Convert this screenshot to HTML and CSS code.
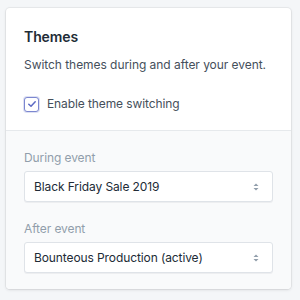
FILE: index.html
```html
<!DOCTYPE html>
<html lang="en">
<head>
    <meta charset="UTF-8">
    <title>Themes</title>
    <link rel="stylesheet" href="styles.css">
</head>
<body>
    <div class="card">
        <div class="card-section">
            <h2>Themes</h2>
            <p class="desc">Switch themes during and after your event.</p>
            <label class="check">
                <span class="box">
                    <svg width="10" height="10" viewBox="0 0 10 10"><path d="M1.8 5.2 L4 7.3 L8.2 2.8" fill="none" stroke="#5c6ac4" stroke-width="1.5" stroke-linecap="round" stroke-linejoin="round"/></svg>
                </span>
                Enable theme switching
            </label>
        </div>
        <div class="card-section subdued">
            <div class="field">
                <label>During event</label>
                <div class="select">
                    <span>Black Friday Sale 2019</span>
                    <svg width="8" height="12" viewBox="0 0 8 12"><path d="M1.5 5 L4 2.5 L6.5 5 Z M1.5 7 L4 9.5 L6.5 7 Z" fill="#919eab"/></svg>
                </div>
            </div>
            <div class="field">
                <label>After event</label>
                <div class="select">
                    <span>Bounteous Production (active)</span>
                    <svg width="8" height="12" viewBox="0 0 8 12"><path d="M1.5 5 L4 2.5 L6.5 5 Z M1.5 7 L4 9.5 L6.5 7 Z" fill="#919eab"/></svg>
                </div>
            </div>
        </div>
    </div>
</body>
</html>
```

FILE: styles.css
```css
body {
    margin: 0;
    padding: 8px 9px 9px 6px;
    background-color: #f4f6f8;
    font-family: Inter, "Noto Sans", sans-serif;
    color: #212b36;
}

.card {
    background-color: #fff;
    border-radius: 4px;
    box-shadow: 0 0 0 1px rgba(63, 63, 68, 0.06), 0 1px 3px 0 rgba(63, 63, 68, 0.15);
    overflow: hidden;
}

.card-section {
    padding: 17px 18px 16px 18px;
}

.card-section.subdued {
    background-color: #f9fafb;
    border-top: 1px solid #e6e9ec;
    padding-top: 17px;
    padding-bottom: 16px;
}

h2 {
    margin: 0;
    font-size: 14px;
    line-height: 24px;
    font-weight: 600;
    letter-spacing: -0.1px;
}

.desc {
    margin: 6px 0 19px;
    font-size: 12px;
    line-height: 20px;
    letter-spacing: -0.05px;
    color: #454f5b;
}

.check {
    display: flex;
    align-items: center;
    gap: 8px;
    font-size: 12px;
    line-height: 20px;
    letter-spacing: -0.1px;
    color: #454f5b;
}

.box {
    width: 13px;
    height: 13px;
    border: 1px solid #7c87d0;
    border-radius: 3px;
    display: flex;
    align-items: center;
    justify-content: center;
    background: #fff;
    box-shadow: 0 0 0 1px rgba(92, 106, 196, 0.2);
}

.field + .field {
    margin-top: 17px;
}

.field label {
    display: block;
    font-size: 12px;
    line-height: 20px;
    letter-spacing: -0.1px;
    color: #919eab;
    margin-bottom: 3px;
}

.select {
    display: flex;
    align-items: center;
    justify-content: space-between;
    height: 29px;
    padding: 0 12px 0 9px;
    background: #fff;
    border: 1px solid #dfe3e8;
    border-radius: 3px;
    box-shadow: 0 1px 0 rgba(22, 29, 37, 0.05);
    font-size: 12px;
    letter-spacing: -0.1px;
    color: #212b36;
}
```
